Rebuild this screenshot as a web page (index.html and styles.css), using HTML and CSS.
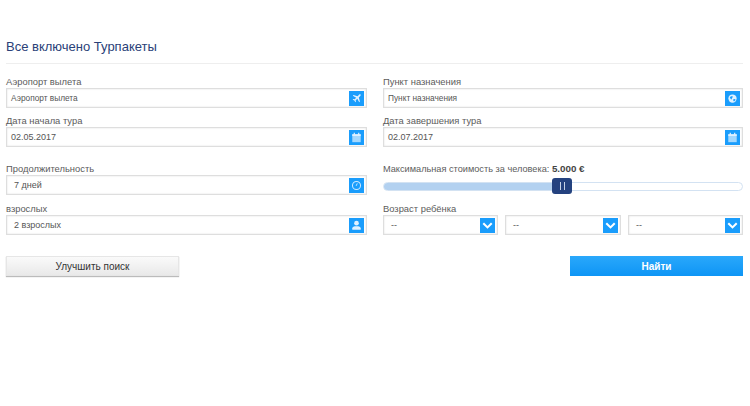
FILE: index.html
```html
<!DOCTYPE html>
<html lang="ru">
<head>
<meta charset="utf-8">
<title>Все включено Турпакеты</title>
<link rel="stylesheet" href="styles.css">
</head>
<body>
<main class="page">
  <h1 class="title">Все включено Турпакеты</h1>
  <div class="form">
    <div class="row row-a">
      <div class="field">
        <div class="label">Аэропорт вылета</div>
        <div class="input small"><span>Аэропорт вылета</span>
          <i class="ico"><svg viewBox="-3 -3 22 22"><path d="M14 2.200c-.6-.6-1.600-.4-2.300.3L9.600 4.600 3.600 3 2.600 4l5 2.800-2.300 2.400-2-.3-.9.8 2.500 1.400 1.400 2.500.8-.9-.3-2 2.400-2.300L12 13.400l1-1-1.600-6 2.100-2.100c.7-.7.9-1.500.5-2.100z"/></svg></i></div>
      </div>
      <div class="field">
        <div class="label">Пункт назначения</div>
        <div class="input small"><span>Пункт назначения</span>
          <i class="ico"><svg viewBox="-2 -2 20 20"><circle cx="8" cy="8" r="5.500"/><path class="cut" d="M5 5.500l2.500-1 1 1.500-1.500 1.500.5 1.500-1.500 0-1.500-2zM9 9l2.500-.5.5 1.500-2 2-1-1.500z"/></svg></i></div>
      </div>
    </div>
    <div class="row row-b">
      <div class="field">
        <div class="label">Дата начала тура</div>
        <div class="input"><span>02.05.2017</span>
          <i class="ico"><svg viewBox="0 0 16 16"><use href="#cal"/></svg></i></div>
      </div>
      <div class="field">
        <div class="label">Дата завершения тура</div>
        <div class="input"><span>02.07.2017</span>
          <i class="ico"><svg viewBox="0 0 16 16"><use href="#cal"/></svg></i></div>
      </div>
    </div>
    <div class="row row-c">
      <div class="field">
        <div class="label">Продолжительность</div>
        <div class="input indent"><span>7 дней</span>
          <i class="ico"><svg viewBox="0 0 16 16"><circle class="ring" cx="8" cy="8" r="4.300"/><path class="hand" d="M8.800 5.800L7.600 8.400"/></svg></i></div>
      </div>
      <div class="field">
        <div class="label label-price">Максимальная стоимость за человека: <b>5.000 €</b></div>
        <div class="slider"><div class="fill"></div><div class="knob"></div></div>
      </div>
    </div>
    <div class="row row-d">
      <div class="field">
        <div class="label">взрослых</div>
        <div class="input indent"><span>2 взрослых</span>
          <i class="ico"><svg viewBox="0 0 16 16"><circle cx="8" cy="5.500" r="2.500"/><path d="M3.500 12.500v-1.700c0-1.100 1.300-1.800 2.700-2.100h3.600c1.400.3 2.700 1 2.700 2.100v1.700z"/></svg></i></div>
      </div>
      <div class="field">
        <div class="label">Возраст ребёнка</div>
        <div class="selects">
          <div class="input indent"><span>--</span><i class="ico"><svg viewBox="0 0 16 16"><path class="chev" d="M3.500 5.500L8 10l4.500-4.500"/></svg></i></div>
          <div class="input indent"><span>--</span><i class="ico"><svg viewBox="0 0 16 16"><path class="chev" d="M3.500 5.500L8 10l4.500-4.500"/></svg></i></div>
          <div class="input indent"><span>--</span><i class="ico"><svg viewBox="0 0 16 16"><path class="chev" d="M3.500 5.500L8 10l4.500-4.500"/></svg></i></div>
        </div>
      </div>
    </div>
    <div class="actions">
      <button class="btn btn-light" type="button">Улучшить поиск</button>
      <button class="btn btn-blue" type="button">Найти</button>
    </div>
  </div>
</main>
<svg class="defs" width="0" height="0"><defs><g id="cal"><path d="M3.500 4.500h9v8.500h-9z" opacity=".7"/><path d="M3.500 4.500h9V6.500h-9zM5 3h1.300v2H5zM9.700 3H11v2H9.700z"/></g></defs></svg>
</body>
</html>
```
FILE: styles.css
```css
* { box-sizing: border-box; }
html, body { margin: 0; background: #fff; }
body { font-family: "Liberation Sans", Arial, sans-serif; color: #555; width: 750px; height: 406px; overflow: hidden; }
.page { padding: 39px 7px 0 6px; }
.title { margin: 0; font-size: 13px; line-height: 16px; font-weight: 400; color: #2a4178; height: 25px; border-bottom: 1px solid #eee; }
.form { padding-top: 11px; }
.row { display: grid; grid-template-columns: 361px 360px; column-gap: 16px; }
.row-b { margin-top: 6px; }
.row-c { margin-top: 15px; }
.row-d { margin-top: 7px; }
.label { font-size: 9.400px; line-height: 13px; height: 13px; color: #5c5c5c; white-space: nowrap; }
.label-price { font-size: 9.200px; }
.label b { color: #444; font-weight: 700; font-size: 9.800px; }
.input { height: 20px; border: 1px solid #dedede; box-shadow: inset 0 0 2px #dcdcdc; display: flex; align-items: center; justify-content: space-between; padding: 0 2px 0 4px; background: #fff; font-size: 9px; color: #555; }
.input.small { font-size: 8.300px; }
.indent span { padding-left: 3px; }
.ico { width: 15px; height: 15px; background: #1a9dfc; display: block; flex: none; }
.ico svg { display: block; width: 15px; height: 15px; fill: #dff1ff; }
.ico .cut { fill: #1a9dfc; }
.ico .ring { fill: none; stroke: #cfeaff; stroke-width: 1.100; }
.ico .hand { fill: none; stroke: #cfeaff; stroke-width: 1; }
.ico .chev { fill: none; stroke: #fff; stroke-width: 2.200; }
.slider { position: relative; height: 9px; margin-top: 7px; border: 1px solid #d3e2f2; border-radius: 5px; background: #fff; }
.fill { width: 172px; height: 7px; background: #b3d1f0; border-radius: 4px 0 0 4px; }
.knob { position: absolute; left: 168px; top: -5px; width: 20px; height: 16px; background: #24427f; border-radius: 3px; }
.knob::after { content: ""; position: absolute; left: 8px; top: 4px; width: 3px; height: 8px; border-left: 1px solid #c6d2e6; border-right: 1px solid #c6d2e6; }
.selects { display: grid; grid-template-columns: 115px 116px 115px; column-gap: 7px; }
.actions { display: flex; justify-content: space-between; margin-top: 21px; }
.btn { height: 20px; border: 0; padding: 0; font-family: inherit; font-size: 10px; }
.btn-light { width: 173px; color: #333; background: linear-gradient(#fafafa, #e9e9e9); box-shadow: 0 1px 1px #bbb; border: 1px solid #e6e6e6; }
.btn-blue { width: 173px; color: #fff; font-weight: 700; background: linear-gradient(#2aa8fb, #0e95f5); }
.defs { position: absolute; }
```
